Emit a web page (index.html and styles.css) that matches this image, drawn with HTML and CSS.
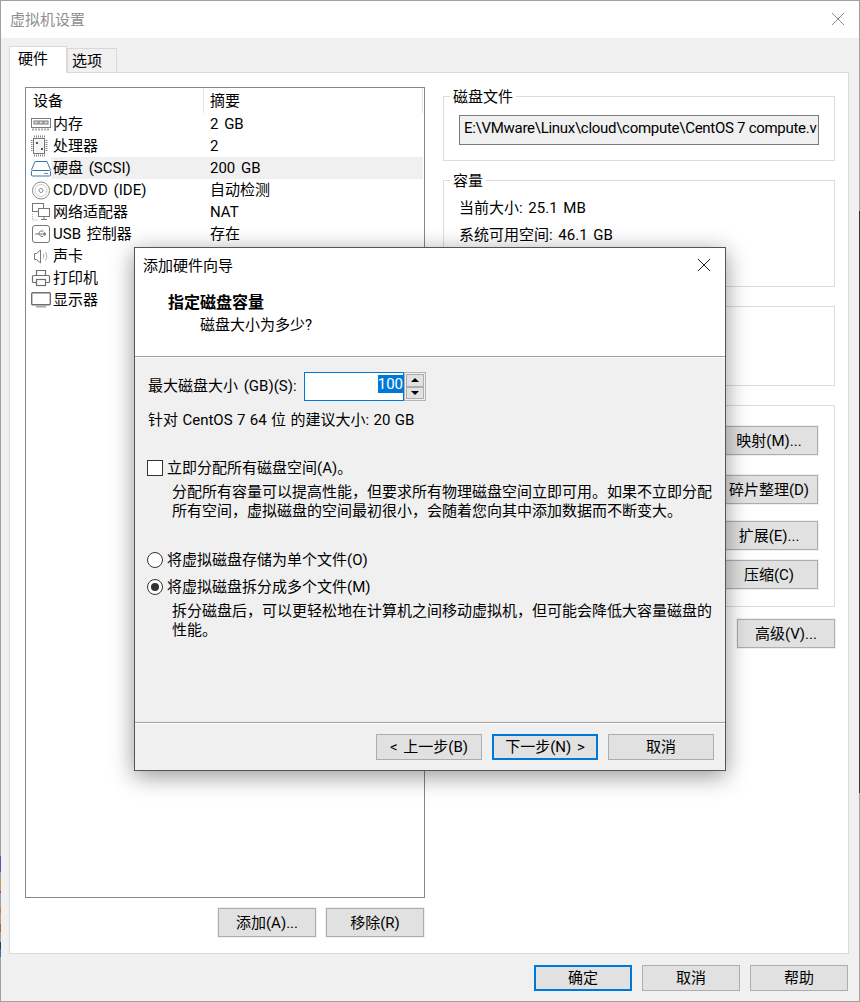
FILE: index.html
```html
<!DOCTYPE html>
<html lang="zh-CN">
<head>
<meta charset="utf-8">
<title>虚拟机设置</title>
<link rel="stylesheet" href="styles.css">
</head>
<body>
<div class="window">
  <header class="titlebar">
    <span class="title">虚拟机设置</span>
    <svg class="close" width="14" height="14" viewBox="0 0 14 14"><path d="M1 1l12 12M13 1L1 13" stroke="#8c8c8c" fill="none"/></svg>
  </header>
  <div class="content">
    <div class="tabs">
      <div class="tab active">硬件</div>
      <div class="tab">选项</div>
    </div>
    <div class="panel">
      <div class="left">
        <div class="list">
          <div class="list-head"><span class="col-a">设备</span><span class="col-b">摘要</span></div>
          <div class="row">
            <svg class="ico" viewBox="0 0 20 22"><g fill="none" stroke="#7a7a7a"><rect x=".5" y="5.5" width="19" height="9"/><rect x="3" y="8" width="4" height="3" fill="#ddd"/><rect x="8" y="8" width="4" height="3" fill="#ddd"/><rect x="13" y="8" width="4" height="3" fill="#ddd"/><path d="M1 16.5h18" stroke="#aaa" stroke-width="2" stroke-dasharray="2 1"/></g></svg>
            <div class="cell"><span class="name">内存</span><span class="val">2 GB</span></div>
          </div>
          <div class="row">
            <svg class="ico" viewBox="0 0 20 22"><g fill="none"><rect x="2.5" y="3.5" width="11" height="15" stroke="#777"/><rect x="3.5" y="4.5" width="9" height="13" fill="#f4f4f4"/><path d="M3 1.5h11M3 20.5h11M.5 5v12M15.5 5v12" stroke="#888" stroke-width="2" stroke-dasharray="1 1"/><path d="M5 7h2v2H5zM10 13h2v2h-2z" fill="#555"/></g></svg>
            <div class="cell"><span class="name">处理器</span><span class="val">2</span></div>
          </div>
          <div class="row">
            <svg class="ico" viewBox="0 0 20 22"><g fill="none" stroke="#3f74a8"><path d="M.5 13L4 4.500h12l3.500 8.500"/><rect x=".5" y="13.500" width="19" height="5.500" rx="1"/><path d="M13 16.500h4" stroke="#888"/></g></svg>
            <div class="cell selected"><span class="name">硬盘 (SCSI)</span><span class="val">200 GB</span></div>
          </div>
          <div class="row">
            <svg class="ico" viewBox="0 0 20 22"><g fill="none" stroke="#8a8a8a"><circle cx="10" cy="11.500" r="8.500"/><circle cx="10" cy="11.500" r="6" stroke="#ccc"/><circle cx="10" cy="11.500" r="2"/></g></svg>
            <div class="cell"><span class="name">CD/DVD (IDE)</span><span class="val">自动检测</span></div>
          </div>
          <div class="row">
            <svg class="ico" viewBox="0 0 20 22"><g fill="none" stroke="#777"><rect x="1.500" y="2.500" width="11" height="8" fill="#fff"/><rect x="7.500" y="7.500" width="11" height="8" fill="#fff"/><path d="M13 15.500v3M10 18.500h6"/><path d="M1.500 13v6h6" stroke="#aaa" stroke-dasharray="1 1"/></g></svg>
            <div class="cell"><span class="name">网络适配器</span><span class="val">NAT</span></div>
          </div>
          <div class="row">
            <svg class="ico" viewBox="0 0 20 22"><g fill="none" stroke="#777"><rect x="1.500" y="2.500" width="17" height="17" rx="2.500"/><path d="M4 11h11M15 11l-2-1.500v3zM7 11l2.500-3h3M8 11l2 2.500h2"/></g></svg>
            <div class="cell"><span class="name">USB 控制器</span><span class="val">存在</span></div>
          </div>
          <div class="row">
            <svg class="ico" viewBox="0 0 20 22"><g fill="none" stroke="#777"><path d="M3.500 8.500h2l4-3.500v13l-4-3.500h-2z"/><path d="M12 8.500c1 1.500 1 3.500 0 5M14.500 7c1.700 2.500 1.700 6 0 8.500" stroke="#aaa"/></g></svg>
            <div class="cell"><span class="name">声卡</span></div>
          </div>
          <div class="row">
            <svg class="ico" viewBox="0 0 20 22"><g fill="none" stroke="#6f6f6f" stroke-width="1.200"><path d="M5.500 8.500v-5h9v5"/><rect x="1.500" y="8.500" width="17" height="7" rx="1"/><rect x="5.500" y="12.500" width="9" height="6" fill="#fff"/></g></svg>
            <div class="cell"><span class="name">打印机</span></div>
          </div>
          <div class="row">
            <svg class="ico" viewBox="0 0 20 22"><g fill="none" stroke="#6f6f6f"><rect x=".7" y="3.700" width="18.600" height="12" rx="1" stroke-width="1.400"/><path d="M5 17.500h10" stroke-width="2" stroke="#aaa"/></g></svg>
            <div class="cell"><span class="name">显示器</span></div>
          </div>
        </div>
        <div class="list-actions">
          <button class="btn tall">添加(A)...</button>
          <button class="btn tall">移除(R)</button>
        </div>
      </div>
      <div class="right">
        <section class="group g-file">
          <span class="legend">磁盘文件</span>
          <div class="path">E:\VMware\Linux\cloud\compute\CentOS 7 compute.v</div>
        </section>
        <section class="group g-cap">
          <span class="legend">容量</span>
          <p class="stat">当前大小: 25.1 MB</p>
          <p class="stat">系统可用空间: 46.1 GB</p>
        </section>
        <section class="group g-blank"></section>
        <section class="group g-tools">
          <button class="btn tall t1">映射(M)...</button>
          <button class="btn tall t2">碎片整理(D)</button>
          <button class="btn tall t3">扩展(E)...</button>
          <button class="btn tall t4">压缩(C)</button>
        </section>
        <div class="adv"><button class="btn tall">高级(V)...</button></div>
      </div>
    </div>
    <footer class="main-actions">
      <button class="btn focus">确定</button>
      <button class="btn">取消</button>
      <button class="btn">帮助</button>
    </footer>
  </div>

  <div class="dialog">
    <div class="dlg-head">
      <div class="dlg-title">
        <span>添加硬件向导</span>
        <svg class="dlg-close" width="14" height="14" viewBox="0 0 14 14"><path d="M1 1l12 12M13 1L1 13" stroke="#222" fill="none"/></svg>
      </div>
      <div class="dlg-h1">指定磁盘容量</div>
      <div class="dlg-h2">磁盘大小为多少?</div>
    </div>
    <div class="dlg-body">
      <div class="size-row">
        <span class="size-label">最大磁盘大小 (GB)(S):</span>
        <div class="spin-input"><span class="sel">100</span></div>
        <div class="spin">
          <div class="spin-btn"><i class="up"></i></div>
          <div class="spin-btn"><i class="down"></i></div>
        </div>
      </div>
      <p class="hint">针对 CentOS 7 64 位 的建议大小: 20 GB</p>
      <div class="opt opt-check"><span class="check"></span>立即分配所有磁盘空间(A)。</div>
      <p class="desc">分配所有容量可以提高性能，但要求所有物理磁盘空间立即可用。如果不立即分配<br>所有空间，虚拟磁盘的空间最初很小，会随着您向其中添加数据而不断变大。</p>
      <div class="opt opt-r1"><span class="radio"></span>将虚拟磁盘存储为单个文件(O)</div>
      <div class="opt opt-r2"><span class="radio on"></span>将虚拟磁盘拆分成多个文件(M)</div>
      <p class="desc">拆分磁盘后，可以更轻松地在计算机之间移动虚拟机，但可能会降低大容量磁盘的<br>性能。</p>
    </div>
    <div class="dlg-foot">
      <button class="btn wide">&lt; 上一步(B)</button>
      <button class="btn wide focus">下一步(N) &gt;</button>
      <button class="btn wide">取消</button>
    </div>
  </div>
</div>
</body>
</html>
```

FILE: styles.css
```css
* { box-sizing: border-box; }
html, body { margin: 0; padding: 0; }
body {
  width: 860px;
  height: 1002px;
  overflow: hidden;
  font-family: Roboto, "Noto Sans CJK SC", sans-serif;
  font-size: 15px;
  word-spacing: 2px;
  color: #000;
  background: #fff;
}
p { margin: 0; }
.window {
  position: relative;
  width: 860px;
  height: 1002px;
  display: flex;
  flex-direction: column;
  border: 1px solid #a0a0a0;
}
/* the dark edge of a window behind, seen along the right border */
.window::after {
  content: "";
  position: absolute;
  top: 210px;
  right: -1px;
  width: 1px;
  height: 582px;
  background: #333;
}
/* desktop icons peeking past the left border */
.window::before {
  content: "";
  position: absolute;
  top: 854px;
  left: -1px;
  width: 1px;
  height: 102px;
  background: linear-gradient(#a0a0a0 0 1px, #5a5a9a 1px 17px, #a0a0a0 17px 26px, #c49a5c 26px 36px, #5a5aa0 36px 38px, #a0a0a0 38px 53px, #c47a3a 53px 58px, #a0a0a0 58px 69px, #b5642c 69px 77px, #a0a0a0 77px 87px, #3a3a3a 87px 94px, #3f6fa8 94px 102px);
}
.titlebar {
  height: 37px;
  flex: none;
  display: flex;
  align-items: center;
  justify-content: space-between;
  padding: 0 14px 1px 9px;
  background: #fff;
}
.title { color: #8f8f8f; line-height: 22px; margin-top: 2px; }
.content {
  flex: 1;
  display: flex;
  flex-direction: column;
  background: #f0f0f0;
  padding: 0 10px 0 8px;
}
.tabs {
  height: 35px;
  flex: none;
  display: flex;
  align-items: flex-end;
  position: relative;
  z-index: 1;
  margin-bottom: -1px;
}
.tab {
  width: 50px;
  height: 24px;
  margin-bottom: 1px;
  padding-left: 4px;
  line-height: 24px;
  background: #f0f0f0;
  border: 1px solid #d9d9d9;
  border-bottom: 0;
}
.tab.active {
  width: 58px;
  height: 27px;
  margin-bottom: 0;
  padding-left: 8px;
  background: #fff;
  border-color: #d9d9d9;
}
.panel {
  height: 882px;
  flex: none;
  display: flex;
  gap: 18px;
  padding: 14px 0 0 15px;
  background: #fff;
  border: 1px solid #d9d9d9;
}
.left { width: 400px; flex: none; }
.list {
  height: 811px;
  border: 1px solid #828790;
  background: #fff;
}
.list-head {
  height: 25px;
  display: flex;
  line-height: 27px;
  margin-right: 1px;
  border-right: 1px solid #e5e5e5;
}
.col-a { width: 178px; padding-left: 7px; border-right: 1px solid #e5e5e5; }
.col-b { padding-left: 6px; }
.row { height: 22px; display: flex; padding-left: 5px; }
.ico { width: 20px; height: 22px; flex: none; display: block; }
.cell {
  flex: 1;
  display: flex;
  line-height: 23px;
  height: 22px;
  margin-right: 1px;
}
.cell.selected { background: #f0f0f0; }
.name { width: 152px; padding-left: 2px; white-space: nowrap; }
.val { padding-left: 7px; white-space: nowrap; }
.list-actions {
  display: flex;
  justify-content: flex-end;
  gap: 10px;
  margin: 10px 1px 0 0;
}
.btn {
  width: 98px;
  height: 26px;
  padding: 0;
  font: inherit;
  word-spacing: inherit;
  line-height: 22px;
  color: #000;
  background: #e1e1e1;
  border: 1px solid #adadad;
  border-radius: 0;
}
.btn.tall { height: 29px; box-shadow: 0 0 0 1px #f0f0f0; }
.btn.wide { width: 106px; }
.btn.focus { border: 2px solid #0078d7; }
.right { width: 392px; flex: none; padding-top: 9px; }
.group { border: 1px solid #dcdcdc; background: #fff; }
.legend {
  display: block;
  width: fit-content;
  margin: -11px 0 0 -9px;
  padding: 0 3px;
  line-height: 22px;
  background: #fff;
}
.g-file { height: 65px; padding-left: 15px; }
.path {
  width: 360px;
  height: 30px;
  margin-top: 7px;
  padding: 0 0 0 4px;
  line-height: 24px;
  word-spacing: 0;
  letter-spacing: -.28px;
  white-space: nowrap;
  border: 1px solid #7a7a7a;
  background: #f0f0f0;
}
.g-cap { height: 107px; margin-top: 19px; padding-left: 15px; }
.stat { line-height: 22px; margin-top: 5px; }
.g-blank { height: 80px; margin-top: 19px; }
.g-tools {
  height: 202px;
  margin-top: 19px;
  display: flex;
  flex-direction: column;
  align-items: flex-end;
  padding: 20px 16px 0 0;
}
.t2 { margin-top: 20px; }
.t3 { margin-top: 17px; }
.t4 { margin-top: 10px; }
.adv { display: flex; justify-content: flex-end; margin-top: 12px; }
.main-actions {
  flex: 1;
  display: flex;
  justify-content: flex-end;
  gap: 10px;
  padding: 11px 1px 0 0;
}
.dialog {
  position: absolute;
  left: 133px;
  top: 246px;
  width: 592px;
  height: 524px;
  display: flex;
  flex-direction: column;
  background: #f0f0f0;
  border: 1px solid #555;
  box-shadow: 0 5px 22px rgba(0, 0, 0, .42);
}
.dlg-head {
  height: 109px;
  flex: none;
  background: #fff;
  border-bottom: 1px solid #a0a0a0;
}
.dlg-title {
  height: 37px;
  display: flex;
  align-items: center;
  justify-content: space-between;
  padding: 0 14px 3px 8px;
}
.dlg-title span { margin-bottom: 2px; }
.dlg-h1 {
  margin: 7px 0 0 33px;
  line-height: 22px;
  font-weight: 700;
  font-size: 16px;
}
.dlg-h2 { margin-left: 65px; line-height: 22px; }
.dlg-body {
  flex: 1;
  padding: 14px 0 0 13px;
  border-top: 1px solid #fff;
}
.size-row { display: flex; height: 29px; align-items: stretch; }
.size-label { width: 156px; line-height: 29px; white-space: nowrap; }
.spin-input {
  width: 100px;
  display: flex;
  justify-content: flex-end;
  align-items: flex-start;
  padding: 2px 0 0 0;
  background: #fff;
  border: 1px solid #0078d7;
}
.sel { background: #0078d7; color: #fff; line-height: 18px; }
.spin {
  width: 22px;
  display: flex;
  flex-direction: column;
  gap: 0;
  padding: 1px;
  border: 1px solid #b4b4b4;
}
.spin-btn {
  flex: 1;
  display: flex;
  align-items: center;
  justify-content: center;
  background: #e1e1e1;
  border: 1px solid #adadad;
}
.spin-btn i { width: 0; height: 0; border-left: 4px solid transparent; border-right: 4px solid transparent; }
.up { border-bottom: 4px solid #000; }
.down { border-top: 4px solid #000; }
.hint { margin-top: 8px; line-height: 22px; word-spacing: .7px; }
.opt { display: flex; align-items: center; line-height: 22px; white-space: nowrap; }
.opt-check { margin-top: 26px; }
.opt-r1 { margin-top: 28px; }
.opt-r2 { margin-top: 5px; }
.check, .radio {
  width: 16px;
  height: 16px;
  flex: none;
  margin: 0 4px 0 -1px;
  background: #fff;
  border: 1px solid #333;
}
.radio { border-radius: 50%; display: flex; align-items: center; justify-content: center; }
.radio.on::after { content: ""; width: 8px; height: 8px; border-radius: 50%; background: #333; }
.desc { margin: 4px 0 0 24px; line-height: 19px; white-space: nowrap; }
.dlg-foot {
  height: 48px;
  flex: none;
  display: flex;
  justify-content: flex-end;
  gap: 10px;
  padding: 11px 11px 0 0;
  border-top: 1px solid #a0a0a0;
  box-shadow: inset 0 1px 0 #fff;
}
```
